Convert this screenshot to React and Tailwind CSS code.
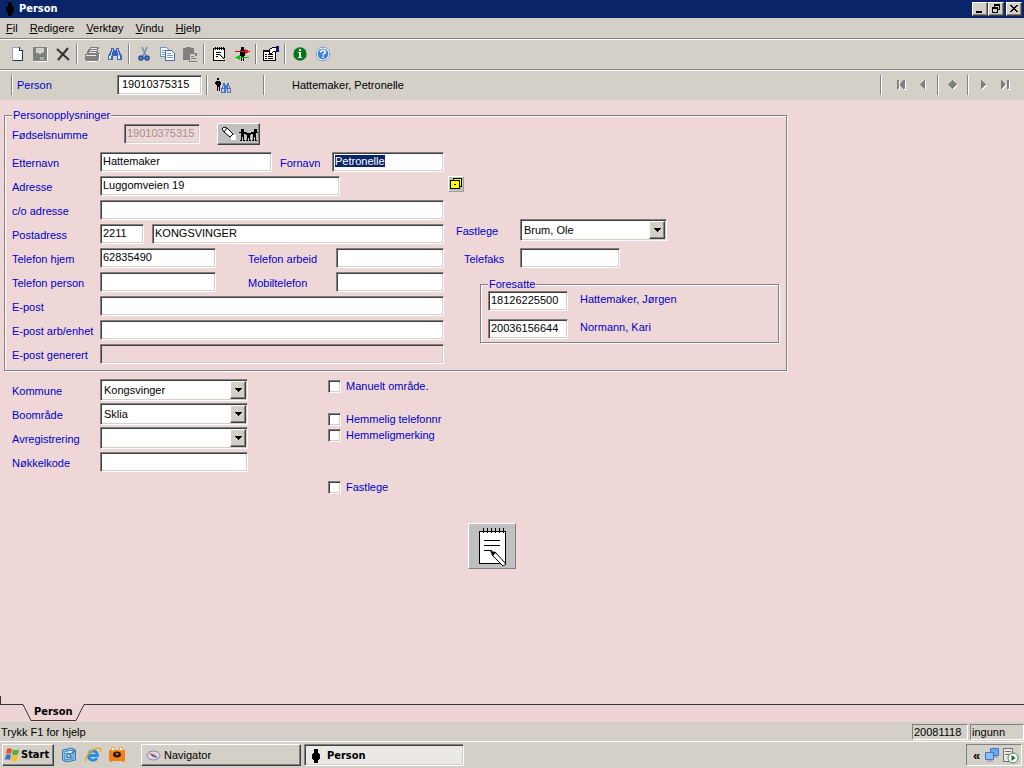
import React, { useEffect, useRef } from 'react'
import clsx from 'clsx'

const SUNKEN = 'border border-t-[#808080] border-l-[#808080] border-r-white border-b-white shadow-[inset_1px_1px_0_#404040,inset_-1px_-1px_0_#d4d0c8]'
const RAISED = 'border border-t-white border-l-white border-r-[#404040] border-b-[#404040] shadow-[inset_-1px_-1px_0_#808080]'
const ETCHED = 'border border-[#808080] shadow-[1px_1px_0_#fff,inset_1px_1px_0_#fff]'

const MENU = ['Fil', 'Redigere', 'Verktøy', 'Vindu', 'Hjelp']

function Pix({ w = 16, h = 16, children, className }) {
  return (
    <svg width={w} height={h} viewBox={`0 0 ${w} ${h}`} shapeRendering="crispEdges" className={clsx('shrink-0', className)} aria-hidden="true">
      {children}
    </svg>
  )
}

function ManIcon() {
  return (
    <Pix w={10} h={14}>
      <path fill="#000" d="M3 0h4v3H3zM3 3h4v1h1v1h1v5H8v1H7v3H3v-3H2v-1H1V5h1V4h1z" />
    </Pix>
  )
}

function Binoculars() {
  return (
    <Pix>
      <path fill="#3a66b8" d="M4 2h3v2h2V2h3v3h1v2h1v2h1v5h-5v-4H6v4H1V9h1V7h1V5h1z" />
      <path fill="#a8c8f4" d="M5 3h1v3H5zM10 3h1v3h-1zM4 6h1v3H4zM11 6h1v3h-1zM3 9h2v1H3zM11 9h2v1h-2z" />
      <path fill="#e4eefc" d="M2 10h2v3H2zM11 10h2v3h-2z" />
    </Pix>
  )
}

const ICONS = {
  Ny: (
    <Pix>
      <path fill="#fff" stroke="#98a4b8" d="M3.5 1.5h7l3 3v10h-10z" />
      <path fill="#20305c" d="M13 5h1v10H4v-1h9zM10 1h1v3h3v1h-4z" />
    </Pix>
  ),
  Lagre: (
    <Pix>
      <path fill="#808080" d="M1 1h14v14H1z" />
      <path fill="#d4d0c8" d="M4 2h8v4h-1v1H9v1H7V7H4z" />
      <path fill="#a8a8a8" d="M8 11h4v3H8z" />
      <path fill="#fff" d="M15 2h1v14H2v-1h13z" />
    </Pix>
  ),
  Slett: (
    <svg width="16" height="16" viewBox="0 0 16 16" aria-hidden="true">
      <path stroke="#333" strokeWidth="2" fill="none" d="M2 3l12 11M13 2L3 14" />
    </svg>
  ),
  'Skriv ut': (
    <Pix>
      <path fill="#808080" d="M6 1h9v2h-1v4h2v6h-2v2H2v-1H1V8h2V5h1V3h2z" />
      <path fill="#e8e8e8" d="M7 2h6v1H7zM6 4h7v1H6zM5 6h7v1H5zM2 9h10v1H2z" />
      <path fill="#fff" d="M15 8h1v6h-1zM3 15h10v1H3z" />
    </Pix>
  ),
  Finn: <Binoculars />,
  'Klipp ut': (
    <svg width="16" height="16" viewBox="0 0 16 16" aria-hidden="true">
      <path stroke="#6f8eb8" strokeWidth="1.6" fill="none" d="M6 1l4 9M11 1L7 10" />
      <g fill="none" stroke="#2350a4" strokeWidth="2">
        <circle cx="5" cy="12" r="1.8" />
        <circle cx="11" cy="12" r="1.8" />
      </g>
    </svg>
  ),
  Kopier: (
    <Pix>
      <path fill="#fff" stroke="#6b93d0" d="M1.5 1.5h6l2 2v7h-8z" />
      <path fill="#fff" stroke="#3f6cb8" d="M6.500 4.500h6l3 3v7h-9z" />
      <path fill="#6f9ade" d="M3 4h3v1H3zM3 6h3v1H3zM3 8h3v1H3zM8 7h4v1H8zM8 9h6v1H8zM8 11h6v1H8z" />
    </Pix>
  ),
  'Lim inn': (
    <Pix>
      <path fill="#808080" d="M1 2h3V1h5v1h3v5h3v9H7v-2H1z" />
      <path fill="#d4d0c8" d="M8 8h5v2h2v5H8z" />
      <path fill="#808080" d="M9 10h3v1H9zM9 12h5v1H9z" />
    </Pix>
  ),
  Notat: (
    <Pix>
      <path fill="#fff" stroke="#000" d="M2.5 2.5h11v12h-11z" />
      <path fill="#000" d="M4 1h1v3H4zM6 1h1v3H6zM8 1h1v3H8zM10 1h1v3h-1zM12 1h1v3h-1zM5 6h5v1H5zM5 8h4v1H5zM5 10h2v1H5zM8 8h1v1H8zM9 9h1v1H9zM10 10h1v1h-1zM11 11h1v1h-1zM12 12h1v1h-1z" />
      <path fill="#c8c070" d="M9 8h1v1H9zM10 9h1v1h-1zM11 10h1v1h-1zM12 11h1v1h-1zM13 12h1v2h-1z" />
    </Pix>
  ),
  Flytt: (
    <Pix>
      <path fill="#000" d="M7 1h3v3H7zM6 4h5v6h-1v5H9v-4H8v4H7v-5H6z" />
      <path fill="#e81010" d="M1 5h10V3h1v1h2v1h2v1h-2v1h-2v1h-1V6H1z" />
      <path fill="#10c020" d="M15 11H6V9H5v1H3v1H1v1h2v1h2v1h1v-2h9z" />
    </Pix>
  ),
  Egenskaper: (
    <Pix w={18}>
      <path fill="#fff" stroke="#000" d="M1.5 4.5h12v10h-12z" />
      <path fill="#000" d="M1 4h7v2H1zM3 8h2v1H3zM6 8h5v1H6zM3 10h2v1H3zM6 10h5v1H6zM3 12h2v1H3zM6 12h5v1H6z" />
      <path fill="#fff" stroke="#000" d="M7.5 3.5l3-2h4v4h-3l-2 2h-2z" />
      <path fill="#181878" d="M14 0h3v6h-3z" />
    </Pix>
  ),
  Info: (
    <svg width="16" height="16" viewBox="0 0 16 16" aria-hidden="true">
      <circle cx="8" cy="8" r="6.7" fill="#087818" />
      <path fill="#fff" d="M7 3h2v2H7zM6 6h3v5h1v1H6v-1h1V7H6z" />
    </svg>
  ),
  Hjelp: (
    <svg width="16" height="16" viewBox="0 0 16 16" aria-hidden="true">
      <circle cx="8" cy="8" r="6.8" fill="#fff" stroke="#7a9cd4" />
      <circle cx="8" cy="8" r="5.4" fill="#3f7fe0" />
      <path fill="none" stroke="#fff" strokeWidth="1.6" d="M5.8 6.6c0-3 4.4-3 4.4-.4 0 1.4-2.2 1.6-2.2 3.2M8 10.4v1.6" />
    </svg>
  ),
}

const TOOLS = [
  ['Ny', 'Lagre', 'Slett'],
  ['Skriv ut', 'Finn'],
  ['Klipp ut', 'Kopier', 'Lim inn'],
  ['Notat', 'Flytt'],
  ['Egenskaper'],
  ['Info', 'Hjelp'],
]

function Separator({ className }) {
  return <span className={clsx('h-5 w-[2px] shrink-0 border-l border-[#808080] bg-white', className)} />
}

function TextInput({ className, ref, ...props }) {
  return (
    <input
      type="text"
      ref={ref}
      className={clsx(
        SUNKEN,
        'h-5 min-w-0 rounded-none bg-white px-[2px] pb-[2px] text-black outline-none selection:bg-[#0a246a] selection:text-white disabled:bg-transparent disabled:text-[#a09090]',
        className
      )}
      {...props}
    />
  )
}

function Select({ id, value, className }) {
  return (
    <div className={clsx('relative', className)}>
      <select id={id} defaultValue={value} className={clsx(SUNKEN, 'block h-[22px] w-full appearance-none rounded-none bg-white px-[3px] text-black outline-none')}>
        <option>{value}</option>
      </select>
      <span className={clsx(RAISED, 'pointer-events-none absolute top-[2px] right-[2px] flex h-[18px] w-4 items-center justify-center bg-[#d4d0c8]')}>
        <Pix w={7} h={4}><path fill="#000" d="M0 0h7v1H0zM1 1h5v1H1zM2 2h3v1H2zM3 3h1v1H3z" /></Pix>
      </span>
    </div>
  )
}

// Label and its fields on one line of the form
function Row({ label, htmlFor, children }) {
  return (
    <div className="flex h-6 items-center">
      <Label htmlFor={htmlFor} className="w-[88px]">{label}</Label>
      {children}
    </div>
  )
}

function Label({ className, ...props }) {
  return <label className={clsx('shrink-0 pt-[2px] whitespace-nowrap', className)} {...props} />
}

function Check({ id, label }) {
  return (
    <div className="flex h-4 items-center gap-[5px]">
      <input type="checkbox" id={id} className={clsx(SUNKEN, 'size-[13px] appearance-none bg-white')} />
      <label htmlFor={id}>{label}</label>
    </div>
  )
}

function TitleBar() {
  return (
    <header className="flex h-[18px] items-center bg-[#0a246a] px-[2px]">
      <span className="flex w-4 justify-center"><ManIcon /></span>
      <h1 className="ml-[1px] flex-1 font-['DejaVu_Sans_Condensed','DejaVu_Sans',sans-serif] text-[11px] font-bold text-white">Person</h1>
      <button aria-label="Minimer" className={clsx(RAISED, 'flex h-[14px] w-4 items-center justify-center bg-[#d4d0c8]')}>
        <Pix w={10} h={10}><path fill="#000" d="M1 7h6v2H1z" /></Pix>
      </button>
      <button aria-label="Gjenopprett" className={clsx(RAISED, 'mr-[2px] flex h-[14px] w-4 items-center justify-center bg-[#d4d0c8]')}>
        <Pix w={10} h={10}><path fill="#000" d="M3 0h6v6H7V5h1V2H4v1H3zM1 3h6v6H1zM2 5v3h4V5z" fillRule="evenodd" /></Pix>
      </button>
      <button aria-label="Lukk" className={clsx(RAISED, 'flex h-[14px] w-4 items-center justify-center bg-[#d4d0c8]')}>
        <Pix w={10} h={10}><path fill="#000" d="M1 1h2v1h1v1h2V2h1V1h2v1H8v1H7v1H6v1h1v1h1v1h1v1H7V7H6V6H4v1H3v1H1V7h1V6h1V5h1V4H3V3H2V2H1z" /></Pix>
      </button>
    </header>
  )
}

function Toolbar() {
  return (
    <div role="toolbar" className="flex h-[31px] items-center border-t border-b border-t-white border-b-[#808080] pb-[1px] pl-[5px]">
      {TOOLS.map((group, i) => (
        <div key={group[0]} className="flex items-center">
          {i > 0 && <span className="flex w-[6px] justify-center"><Separator /></span>}
          {group.map((name) => (
            <button key={name} aria-label={name} className="flex h-[22px] w-[23px] items-center justify-center">{ICONS[name]}</button>
          ))}
        </div>
      ))}
    </div>
  )
}

function NavButton({ label, d }) {
  return (
    <button aria-label={label} className="flex w-[22px] justify-center">
      <Pix w={12} h={12}>
        <path fill="#fff" d={d} transform="translate(1 1)" />
        <path fill="#808080" d={d} />
      </Pix>
    </button>
  )
}

function RecordBar() {
  return (
    <div className="flex h-[30px] items-center border-t border-white pb-[2px] pl-[11px]">
      <Separator />
      <label htmlFor="personnr" className="w-[104px] pl-1 text-[#0000c8]">Person</label>
      <TextInput id="personnr" defaultValue="19010375315" className="w-[85px] px-[4px]" />
      <Separator className="ml-1" />
      <button aria-label="Finn person" className="ml-[6px] flex h-5 w-[18px] items-center">
        <Pix w={18} h={18}>
          <path fill="#000" d="M3 2h2v2H3zM2 5h4v1h1v3H6v6H5v-4H4v4H3V9H2V8H1V6h1z" />
          <path fill="#4a72c0" d="M9 7h2v2h2V7h2v3h1v2h1v5h-4v-4h-1v4H7v-5h1v-2h1z" />
          <path fill="#b8d0f8" d="M9 10h1v2H9zM14 10h1v2h-1zM8 13h2v3H8zM14 13h2v3h-2z" />
        </Pix>
      </button>
      <Separator className="ml-[31px]" />
      <span className="ml-[27px] flex-1">Hattemaker, Petronelle</span>
      <div className="flex items-center pr-[8px]">
        <Separator className="mr-[8px]" />
        <NavButton label="Første" d="M2 1h2v9H2zM8 1h2v9H8V9H7V8H6V7H5V4h1V3h1V2h1z" />
        <NavButton label="Forrige" d="M7 1h1v9H7V9H6V8H5V7H4V6H3V5h1V4h1V3h1V2h1z" />
        <Separator className="mx-[3px]" />
        <NavButton label="Merk" d="M5 1h1v1h1v1h1v1h1v1h1v1H9v1H8v1H7v1H6v1H5V9H4V8H3V7H2V6H1V5h1V4h1V3h1V2h1z" />
        <Separator className="mx-[3px]" />
        <NavButton label="Neste" d="M4 1h1v1h1v1h1v1h1v1h1v1H8v1H7v1H6v1H5v1H4z" />
        <NavButton label="Siste" d="M2 1h1v1h1v1h1v1h1v3H5v1H4v1H3v1H2zM8 1h2v9H8z" />
      </div>
    </div>
  )
}

function PersonForm() {
  const firstName = useRef(null)

  useEffect(() => {
    firstName.current.focus()
    firstName.current.select()
  }, [])

  return (
    <fieldset className={clsx(ETCHED, 'mr-1 ml-1 flex max-w-[783px] pb-1 pl-[7px]')}>
      <legend className="bg-[#eed7d6] px-[1px] leading-[13px]">Personopplysninger</legend>
      <div className="w-[432px] shrink-0">
        <div className="flex h-7 items-center pb-1">
          <Label htmlFor="fnr" className="w-28">Fødselsnumme</Label>
          <TextInput id="fnr" defaultValue="19010375315" disabled className="w-[76px]" />
          <button aria-label="Familie" className={clsx(RAISED, 'ml-[17px] flex h-[22px] w-[43px] items-center justify-center bg-[#c0c0c0]')}>
            <Pix w={38} h={18}>
              <path fill="#fff" d="M11 10h5v5h-5z" />
              <path fill="#fff" stroke="#000" shapeRendering="auto" d="M2 4l2-2 3 1 6 6-3 3-6-5zM4 7l3-4" />
              <path fill="#000" d="M21 4h3v3h-3zM35 4h2v3h-3V4zM28 8h2v2h-2zM18 7h9v1h1v2h2V8h1V7h7v1h-2v7h1v1h-2v-4h-1v4h-2v-1h1V9h-2v1h-1v5h1v1h-2v-3h-1v3h-2v-1h1v-5h-1V9h-2v6h1v1h-2v-4h-1v4h-2v-1h1V8h-2z" />
            </Pix>
          </button>
        </div>
        <Row label="Etternavn" htmlFor="etternavn">
          <TextInput id="etternavn" defaultValue="Hattemaker" className="w-[172px]" />
          <Label htmlFor="fornavn" className="w-[60px] pl-2">Fornavn</Label>
          <TextInput id="fornavn" ref={firstName} defaultValue="Petronelle" className="flex-1" />
        </Row>
        <Row label="Adresse" htmlFor="adresse">
          <TextInput id="adresse" defaultValue="Luggomveien 19" className="w-60" />
        </Row>
        <Row label="c/o adresse" htmlFor="co"><TextInput id="co" className="flex-1" /></Row>
        <Row label="Postadress" htmlFor="postnr">
          <TextInput id="postnr" defaultValue="2211" className="w-11" />
          <TextInput aria-label="Poststed" defaultValue="KONGSVINGER" className="ml-2 flex-1" />
        </Row>
        <Row label="Telefon hjem" htmlFor="tlfhjem">
          <TextInput id="tlfhjem" defaultValue="62835490" className="w-[116px]" />
          <Label htmlFor="tlfarb" className="w-30 pl-8">Telefon arbeid</Label>
          <TextInput id="tlfarb" className="flex-1" />
        </Row>
        <Row label="Telefon person" htmlFor="tlfpers">
          <TextInput id="tlfpers" className="w-[116px]" />
          <Label htmlFor="mobil" className="w-30 pl-8">Mobiltelefon</Label>
          <TextInput id="mobil" className="flex-1" />
        </Row>
        <Row label="E-post" htmlFor="epost"><TextInput id="epost" className="flex-1" /></Row>
        <Row label="E-post arb/enhet" htmlFor="epostarb"><TextInput id="epostarb" className="flex-1" /></Row>
        <Row label="E-post generert" htmlFor="epostgen">
          <TextInput id="epostgen" disabled className="flex-1" />
        </Row>
      </div>

      <div className="flex flex-1 flex-col pt-[54px] pr-[7px] pl-1">
        <button aria-label="Adressekort" className="flex size-4 items-center justify-center border border-t-white border-l-white border-r-[#a0a0a0] border-b-[#a0a0a0] bg-[#c0c0c0]">
          <Pix w={12} h={12}>
            <path fill="#ff0" stroke="#000" d="M3.500.500h8v8h-2v2h-9v-8h3z" />
            <path fill="#000" d="M1 2h8v1H1zM9 2h1v9H9zM4 6h2v1H4z" />
          </Pix>
        </button>
        <div className="mt-[26px] flex h-6 items-center pl-2">
          <Label htmlFor="lege" className="w-16">Fastlege</Label>
          <Select id="lege" value="Brum, Ole" className="w-[147px]" />
        </div>
        <div className="mt-1 flex h-6 items-center pl-4">
          <Label htmlFor="faks" className="w-14">Telefaks</Label>
          <TextInput id="faks" className="w-[100px]" />
        </div>
        <fieldset className={clsx(ETCHED, 'mt-2 ml-8 pb-[3px] pl-[7px]')}>
          <legend className="bg-[#eed7d6] px-[1px] leading-[13px]">Foresatte</legend>
          <div className="flex flex-col gap-2">
            <div className="flex items-center gap-3">
              <TextInput aria-label="Foresatt 1" defaultValue="18126225500" className="w-20" />
              <span className="pb-1">Hattemaker, Jørgen</span>
            </div>
            <div className="flex items-center gap-3">
              <TextInput aria-label="Foresatt 2" defaultValue="20036156644" className="w-20" />
              <span className="pb-1">Normann, Kari</span>
            </div>
          </div>
        </fieldset>
      </div>
    </fieldset>
  )
}

function SheetTab() {
  return (
    <div className="shrink-0">
      <div className="h-2 w-px bg-[#403030]" />
      <div className="flex h-[18px] bg-[#eed4d5]">
        <div className="w-[23px] border-t border-[#403030]" />
        <svg width="8" height="18" viewBox="0 0 8 18" aria-hidden="true"><path fill="none" stroke="#403030" d="M0 .5l8 16" /></svg>
        <button className="mb-[1px] border-b border-[#403030] px-[3px] text-[11px] font-bold text-black font-['DejaVu_Sans_Condensed','DejaVu_Sans',sans-serif]">Person</button>
        <svg width="8" height="18" viewBox="0 0 8 18" aria-hidden="true"><path fill="none" stroke="#403030" d="M0 16.5l8-16" /></svg>
        <div className="flex-1 border-t border-[#403030]" />
      </div>
    </div>
  )
}

function StatusBar() {
  const panel = 'flex h-4 items-center border border-t-[#808080] border-l-[#808080] border-r-white border-b-white px-[1px]'
  return (
    <div className="flex h-[19px] shrink-0 items-center gap-[2px] pl-[1px]">
      <span className="flex-1">Trykk F1 for hjelp</span>
      <span className={clsx(panel, 'w-14')}>20081118</span>
      <span className={clsx(panel, 'w-[54px]')}>ingunn</span>
    </div>
  )
}

function Taskbar() {
  return (
    <footer className="flex h-[27px] shrink-0 items-center border-t border-white pr-[2px] pl-[2px]">
      <button className={clsx(RAISED, "flex h-[22px] w-[52px] items-center gap-[1px] pl-[1px] font-['DejaVu_Sans_Condensed','DejaVu_Sans',sans-serif] text-[11px] font-bold")}>
        <svg width="16" height="16" viewBox="0 0 16 16" className="shrink-0" aria-hidden="true">
          <path fill="#e4512c" d="M3 2c2-1 3-1 5 0L7 7C5 6 4 6 2 7z" />
          <path fill="#5aa83c" d="M9 2.5c2 1 3 1 6 0l-1 5c-2 1-4 1-6 0z" />
          <path fill="#3a70d0" d="M2 8c2-1 3-1 5 0l-1 5c-2-1-3-1-5 0z" />
          <path fill="#f4c020" d="M8 8.5c2 1 3 1 6 0l-1 5c-2 1-4 1-6 0z" />
        </svg>
        Start
      </button>
      <div className="ml-[7px] flex gap-[7px]">
        <button aria-label="Vis skrivebord">
          <svg width="16" height="16" viewBox="0 0 16 16" aria-hidden="true">
            <path fill="#8cc4ec" stroke="#3078b8" d="M1.5 3l9-2 4 2v10l-9 2-4-2z" />
            <path fill="#fff" stroke="#3078b8" d="M4 4.500l8-1.500v8.500L4 13z" />
            <path fill="none" stroke="#2878b8" strokeWidth="1.5" d="M9 6.500H6v4h4V8M8 8.500l6-5" />
          </svg>
        </button>
        <button aria-label="Internet Explorer">
          <svg width="18" height="16" viewBox="0 0 18 16" aria-hidden="true">
            <path fill="none" stroke="#2a8ae0" strokeWidth="2.8" d="M4.500 8.500h9c0-6-8.500-6-9 0 0 5.500 6.500 6 8.500 2.500" />
            <path fill="none" stroke="#e8b020" strokeWidth="1.4" d="M2 14.500C-1 12 7 2 14 1c4-.4 3 2 2 4" />
          </svg>
        </button>
        <button aria-label="Rev">
          <svg width="16" height="16" viewBox="0 0 16 16" aria-hidden="true">
            <path fill="#f08018" d="M0 3h16v11l-2 1-2-1H4l-2 1-2-1z" />
            <path fill="#f0a040" d="M2 0h4v4H2zM10 0h4v4h-4z" />
            <path fill="#fff" d="M3 1h2v2H3zM11 1h2v2h-2z" />
            <ellipse cx="8" cy="7.500" rx="4" ry="3" fill="#301808" />
            <path fill="#c08040" d="M7 6h2v2H7z" />
          </svg>
        </button>
      </div>
      <button className={clsx(RAISED, 'ml-4 flex h-[22px] w-[160px] items-center gap-[3px] pl-1')}>
        <svg width="15" height="14" viewBox="0 0 15 14" aria-hidden="true">
          <ellipse cx="7.500" cy="7.500" rx="6.500" ry="4.500" fill="#d8d8e8" stroke="#8888a0" />
          <path fill="#c03838" d="M3 5l6 2-2 2z" />
          <path fill="#5068a8" d="M9 7l3 3-5-1z" />
        </svg>
        Navigator
      </button>
      <button className={clsx(SUNKEN, "ml-[3px] flex h-[22px] w-[160px] items-center gap-[6px] bg-[#ebe9e5] pt-[2px] pl-[6px] font-['DejaVu_Sans_Condensed','DejaVu_Sans',sans-serif] text-[11px] font-bold")}>
        <ManIcon />
        Person
      </button>
      <div className="ml-auto flex h-[22px] w-14 items-center gap-[2px] border border-t-[#808080] border-l-[#808080] border-r-white border-b-white pl-1">
        <button aria-label="Vis skjulte ikoner" className="w-[11px] text-[13px] font-bold leading-none">«</button>
        <svg width="16" height="16" viewBox="0 0 16 16" className="shrink-0" aria-hidden="true">
          <path fill="#68a8f0" stroke="#4878c0" d="M6.500 1.500h8v7h-8z" />
          <path fill="#88c0f8" stroke="#4878c0" d="M1.500 5.500h8v7h-8z" />
          <path fill="#a0b0c8" d="M3 13h6v2H3zM10 9h4v2h-4z" />
        </svg>
        <svg width="17" height="17" viewBox="0 0 17 17" className="shrink-0" aria-hidden="true">
          <path fill="#e8e8e8" stroke="#707070" d="M1.500 1.500h9v13h-9z" />
          <path stroke="#707070" d="M3 4.500h6M3 7.500h6" />
          <circle cx="11" cy="11" r="5" fill="#fff" stroke="#508050" />
          <path fill="#087818" d="M9.500 8v6l4-3z" />
        </svg>
      </div>
    </footer>
  )
}

export default function App() {
  return (
    <div className="flex min-h-screen flex-col bg-[#d4d0c8] font-['Liberation_Sans',Arial,sans-serif] text-[11px] leading-[14px] text-black">
      <TitleBar />
      <nav className="flex h-[21px] items-center gap-3 border-b border-[#808080] pl-[6px]">
        {MENU.map((item) => (
          <button key={item}><span className="underline">{item[0]}</span>{item.slice(1)}</button>
        ))}
      </nav>
      <Toolbar />
      <RecordBar />

      <main className="flex-1 bg-[#eed7d6] pt-[9px] text-[#0000c8]">
        <PersonForm />
        <div className="mt-[7px] flex gap-20 pl-3">
          <div className="w-[236px]">
            <Row label="Kommune" htmlFor="kommune"><Select id="kommune" value="Kongsvinger" className="flex-1" /></Row>
            <Row label="Boområde" htmlFor="boomrade"><Select id="boomrade" value="Sklia" className="flex-1" /></Row>
            <Row label="Avregistrering" htmlFor="avreg"><Select id="avreg" value="" className="flex-1" /></Row>
            <Row label="Nøkkelkode" htmlFor="nokkel"><TextInput id="nokkel" className="flex-1" /></Row>
          </div>
          <div>
            <Check id="manuelt" label="Manuelt område." />
            <div className="mt-[17px] mb-9">
              <Check id="hemtlf" label="Hemmelig telefonnr" />
              <Check id="hemmerk" label="Hemmeligmerking" />
            </div>
            <Check id="fastlege" label="Fastlege" />
          </div>
        </div>
        <button aria-label="Skriv notat" className="mt-7 ml-[468px] flex h-[46px] w-12 items-center justify-center border border-t-white border-l-white border-r-[#808080] border-b-[#808080] bg-[#c0c0c0]">
          <Pix w={30} h={40}>
            <path fill="#fff" stroke="#000" d="M2.500 5.500h26v32h-26z" />
            <path fill="#000" d="M2 5h27v1H2zM6 2h1v5H6zM10 2h1v5h-1zM14 2h1v5h-1zM18 2h1v5h-1zM22 2h1v5h-1zM26 2h1v5h-1zM7 14h16v1H7zM7 19h16v1H7zM7 24h8v1H7z" />
            <g shapeRendering="auto">
              <path fill="#fff" stroke="#000" d="M15 26l4 1 10 11-3 2-11-11z" />
              <path fill="#000" d="M13 25l6 1-3 4z" />
            </g>
          </Pix>
        </button>
      </main>

      <div className="bg-[#eed7d6]"><SheetTab /></div>
      <StatusBar />
      <Taskbar />
    </div>
  )
}
